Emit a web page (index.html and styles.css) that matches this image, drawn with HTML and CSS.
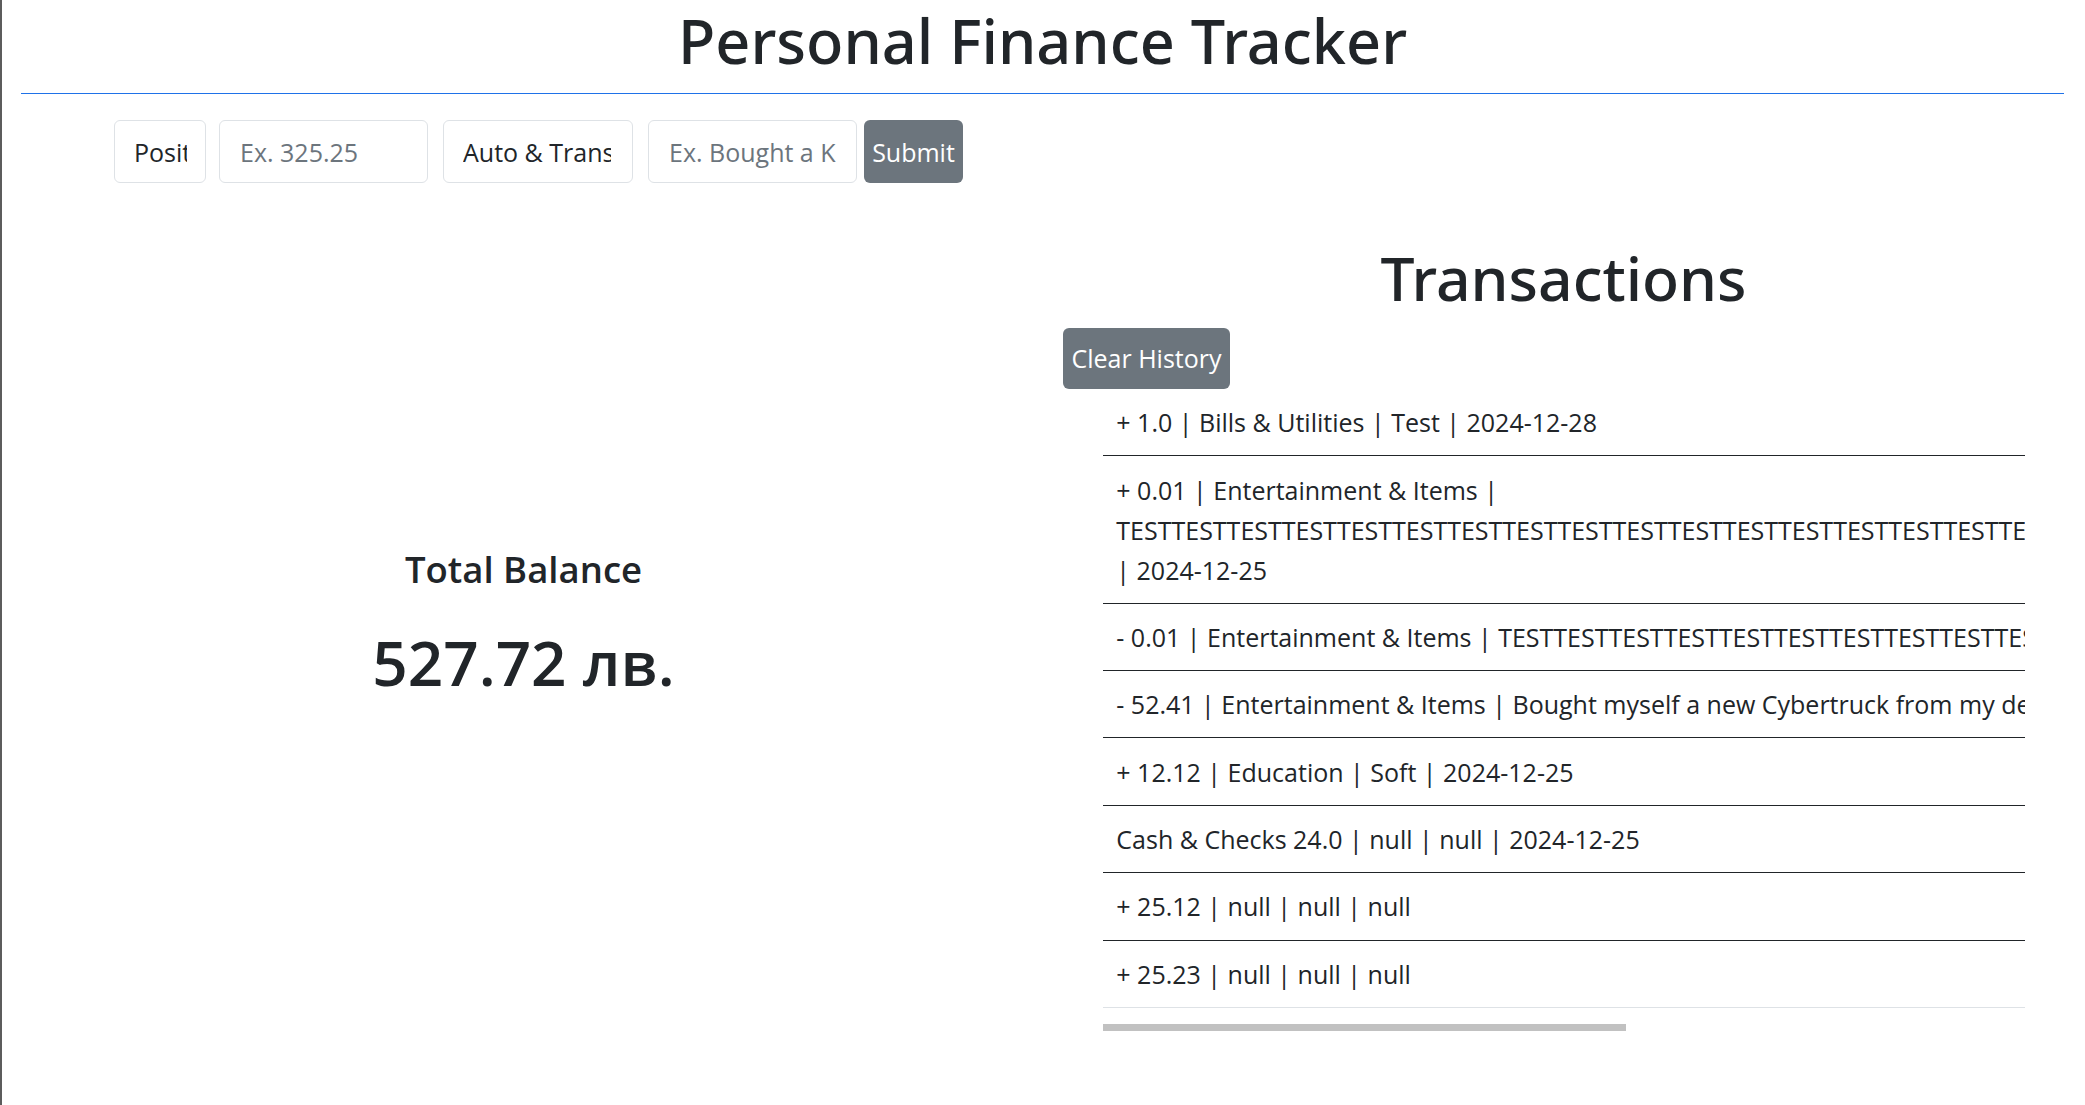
FILE: index.html
```html
<!DOCTYPE html>
<html lang="en">
<head>
<meta charset="utf-8">
<title>Personal Finance Tracker</title>
<link rel="stylesheet" href="styles.css">
</head>
<body>
<div class="page">
  <div class="container">
    <h1 class="title">Personal Finance Tracker</h1>
    <hr class="rule">
    <form class="entry-form">
      <select class="field field-type"><option>Positive</option><option>Negative</option></select>
      <input class="field field-amount" type="text" placeholder="Ex. 325.25">
      <select class="field field-category"><option>Auto &amp; Transportation</option><option>Bills &amp; Utilities</option></select>
      <input class="field field-desc" type="text" placeholder="Ex. Bought a Kindle">
      <button class="btn btn-submit" type="button">Submit</button>
    </form>
    <div class="main">
      <section class="balance">
        <h3 class="balance-label">Total Balance</h3>
        <p class="balance-value">527.72 лв.</p>
      </section>
      <section class="transactions">
        <h2 class="tx-title">Transactions</h2>
        <button class="btn btn-clear" type="button">Clear History</button>
        <div class="tx-scroll">
          <ul class="tx-list">
            <li>+ 1.0 | Bills &amp; Utilities | Test | 2024-12-28</li>
            <li>+ 0.01 | Entertainment &amp; Items | TESTTESTTESTTESTTESTTESTTESTTESTTESTTESTTESTTESTTESTTESTTESTTESTTESTTESTTESTTESTTESTTESTTESTTESTTESTTEST | 2024-12-25</li>
            <li class="nowrap">- 0.01 | Entertainment &amp; Items | TESTTESTTESTTESTTESTTESTTESTTESTTESTTESTTESTTESTTESTTESTTESTTESTTESTTESTTESTTEST | 2024-12-25</li>
            <li class="nowrap">- 52.41 | Entertainment &amp; Items | Bought myself a new Cybertruck from my dealership downtown | 2024-12-25</li>
            <li>+ 12.12 | Education | Soft | 2024-12-25</li>
            <li>Cash &amp; Checks 24.0 | null | null | 2024-12-25</li>
            <li>+ 25.12 | null | null | null</li>
            <li>+ 25.23 | null | null | null</li>
          </ul>
        </div>
        <div class="scrollbar"><div class="thumb"></div></div>
      </section>
    </div>
  </div>
</div>
</body>
</html>
```

FILE: styles.css
```css
* { box-sizing: border-box; }

html, body {
  margin: 0;
  padding: 0;
  background: #ffffff;
}

body {
  font-family: "Open Sans", "Noto Sans", sans-serif;
  color: #212529;
  font-size: 25px;
  line-height: 40px;
}

.page {
  min-height: 100vh;
  border-left: 2px solid #5c5c5c;
}

.container {
  margin-left: 19px;
  width: 2043px;
}

.title {
  margin: 0;
  padding-top: 3px;
  font-family: "Noto Sans", "Open Sans", sans-serif;
  font-size: 61.2px;
  line-height: 75px;
  font-weight: 500;
  text-align: center;
}

.rule {
  margin: 15px 0 0;
  height: 0;
  border: 0;
  border-top: 1px solid #1f72e8;
}

.entry-form {
  display: flex;
  margin-top: 26px;
  padding-left: 93px;
}

.field {
  height: 63px;
  border: 1px solid #dee2e6;
  border-radius: 6px;
  font-family: inherit;
  font-size: 25px;
  color: #212529;
  background: #ffffff;
  padding: 0 20px;
  outline: none;
}

select.field {
  appearance: none;
  -webkit-appearance: none;
}

.field::placeholder {
  color: #6c757d;
  opacity: 1;
}

.field-type {
  width: 92px;
  margin-right: 13px;
  padding: 0 18px 0 19px;
}

.field-amount {
  width: 209px;
  margin-right: 15px;
}

.field-category {
  width: 190px;
  margin-right: 15px;
  padding: 0 21px 0 19px;
}

.field-desc {
  width: 209px;
  margin-right: 7px;
}

.btn {
  font-family: inherit;
  font-size: 25px;
  color: #ffffff;
  background: #6c757d;
  border: 0;
  border-radius: 6px;
  padding: 0 8px;
}

.btn-submit {
  width: 99px;
  height: 63px;
}

.btn-clear {
  display: block;
  width: 167px;
  height: 61px;
}

.main {
  display: grid;
  grid-template-columns: 1005px 1001px;
  column-gap: 37px;
}

.balance {
  padding-top: 364.5px;
  text-align: center;
}

.balance-label {
  margin: 0;
  font-size: 36.5px;
  line-height: 43px;
  font-weight: 600;
}

.balance-value {
  margin: 35px 0 0;
  font-size: 62px;
  line-height: 72px;
  font-weight: 600;
}

.transactions {
  padding-top: 58.7px;
}

.tx-title {
  margin: 0 0 14.3px;
  text-align: center;
  font-family: "Noto Sans", "Open Sans", sans-serif;
  font-size: 60.6px;
  line-height: 72px;
  font-weight: 500;
}

.tx-scroll {
  margin-left: 40px;
  width: 922px;
  overflow: hidden;
}

.tx-list {
  list-style: none;
  margin: 0;
  padding: 0;
}

.tx-list li {
  padding: 13.2px 13.33px;
  line-height: 40px;
  border-bottom: 1px solid #212529;
}

.tx-list li:last-child {
  border-bottom-color: #dee2e6;
}

.tx-list li.nowrap {
  white-space: nowrap;
}

.scrollbar {
  margin: 16px 0 0 40px;
  width: 922px;
  height: 7px;
}

.thumb {
  width: 523px;
  height: 7px;
  background: #c1c1c1;
}
```
